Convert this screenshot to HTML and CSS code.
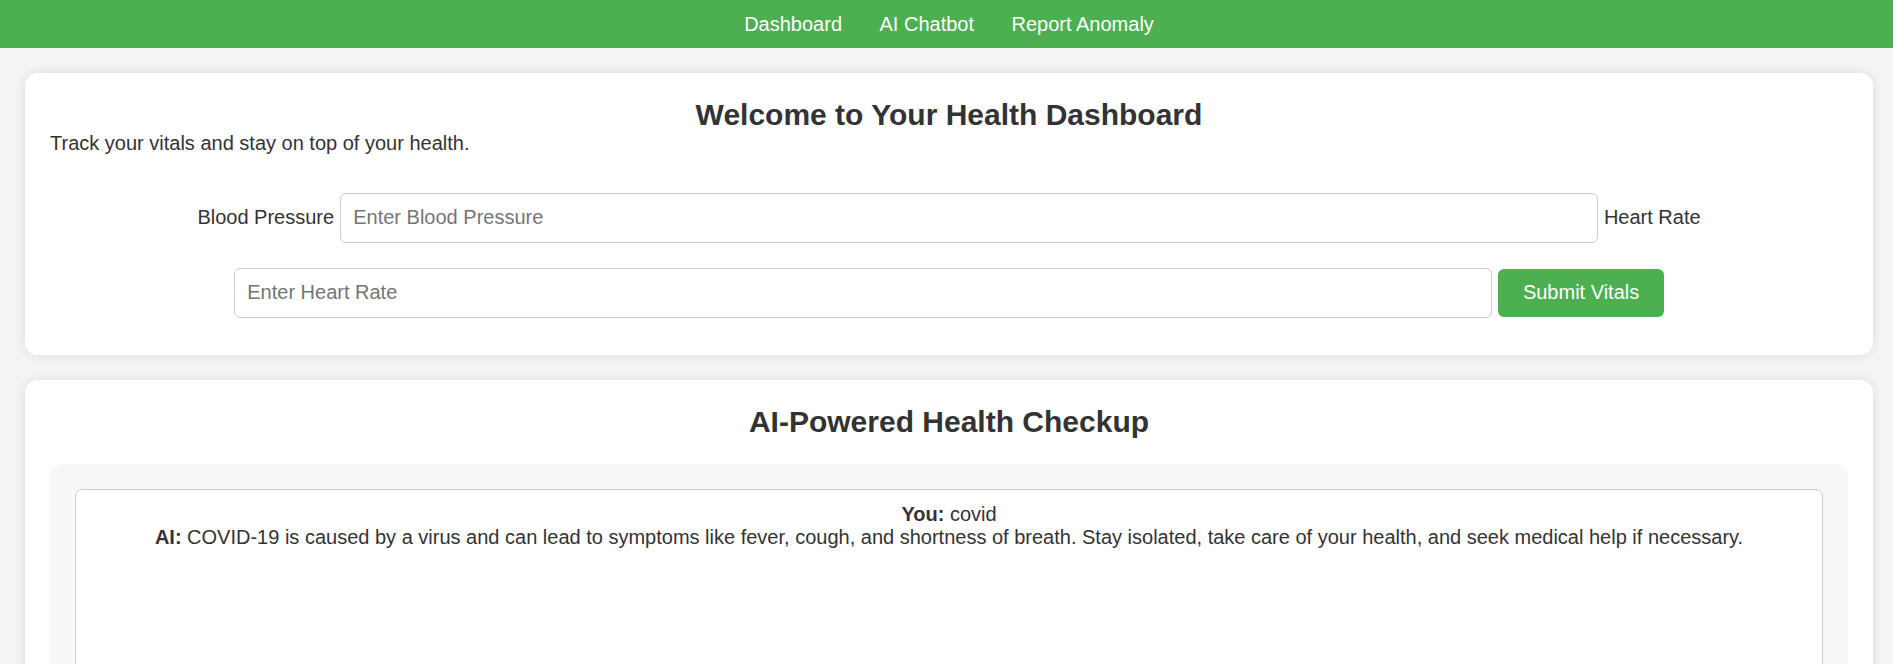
FILE: index.html
```html
<!DOCTYPE html>
<html lang="en">
<head>
<meta charset="utf-8">
<title>Health Dashboard</title>
<link rel="stylesheet" href="styles.css">
</head>
<body>
<nav class="navbar">
  <a href="#" class="nav-link">Dashboard</a>
  <a href="#" class="nav-link">AI Chatbot</a>
  <a href="#" class="nav-link">Report Anomaly</a>
</nav>
<main class="container">
  <section class="card">
    <h2 class="card-title">Welcome to Your Health Dashboard</h2>
    <p class="intro">Track your vitals and stay on top of your health.</p>
    <form class="vitals-form">
      <label for="bp">Blood Pressure</label>
      <input id="bp" type="text" placeholder="Enter Blood Pressure">
      <label for="hr">Heart Rate</label>
      <input id="hr" type="text" placeholder="Enter Heart Rate">
      <button type="button" class="btn">Submit Vitals</button>
    </form>
  </section>
  <section class="card">
    <h2 class="card-title spaced">AI-Powered Health Checkup</h2>
    <div class="chat-wrap">
      <div class="chat-box">
        <div class="msg"><strong>You:</strong> covid</div>
        <div class="msg"><strong>AI:</strong> COVID-19 is caused by a virus and can lead to symptoms like fever, cough, and shortness of breath. Stay isolated, take care of your health, and seek medical help if necessary.</div>
      </div>
    </div>
  </section>
</main>
</body>
</html>
```
FILE: styles.css
```css
html, body {
  margin: 0;
  padding: 0;
}
body {
  background: #f4f4f4;
  font-family: "Liberation Sans", Arial, sans-serif;
  font-size: 20px;
  color: #333;
  overflow: hidden;
}
.navbar {
  background: #4caf50;
  padding: 12.5px 0 12.5px 5px;
  display: flex;
  justify-content: center;
  gap: 37.5px;
  line-height: 23px;
}
.nav-link {
  color: #fff;
  text-decoration: none;
}
.container {
  padding: 25px 20px 0 25px;
}
.card {
  background: #fff;
  border-radius: 12.5px;
  padding: 25px;
  margin-bottom: 25px;
  box-shadow: 0 0 12px rgba(0, 0, 0, 0.1);
}
.card-title {
  margin: 0;
  font-size: 30px;
  text-align: center;
  color: #333;
}
.card-title.spaced {
  margin-bottom: 25px;
}
.intro {
  margin: 0 0 20px;
}
.vitals-form {
  text-align: center;
  padding-top: 5px;
}
.vitals-form input {
  box-sizing: border-box;
  width: 70%;
  padding: 12.5px;
  margin: 12.5px 0;
  border: 1px solid #ccc;
  border-radius: 6px;
  font-family: inherit;
  font-size: 20px;
  color: #333;
}
.vitals-form input::placeholder {
  color: #757575;
}
.btn {
  background: #4caf50;
  color: #fff;
  border: none;
  border-radius: 6px;
  padding: 12.5px 25px;
  font-family: inherit;
  font-size: 20px;
}
.chat-wrap {
  background: #f8f8f8;
  border-radius: 12.5px;
  padding: 25px;
}
.chat-box {
  background: #fff;
  border: 1px solid #ccc;
  border-radius: 7px;
  padding: 12.5px;
  height: 375px;
  text-align: center;
}
```
